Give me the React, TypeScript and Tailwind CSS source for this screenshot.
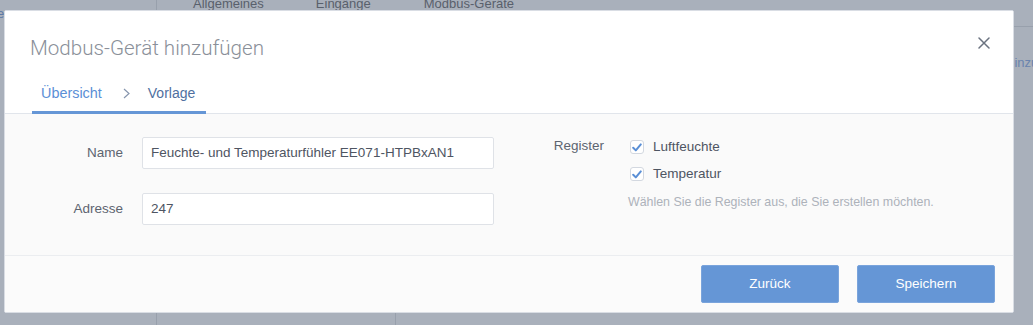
import React from "react";

const sans = "font-['Liberation_Sans',Arial,sans-serif]";

const Check = () => (
  <span className="flex h-[14px] w-[14px] items-center justify-center rounded-[3px] border border-[#d3d8e0] bg-white">
    <svg width="10" height="9" viewBox="0 0 10 9">
      <path d="M1.2 4.8 L3.8 7.4 L8.8 1.4" fill="none" stroke="#5a8fd6" strokeWidth="2" strokeLinecap="round" strokeLinejoin="round" />
    </svg>
  </span>
);

const Field = ({ label, value }: { label: string; value: string }) => (
  <div className="flex items-center">
    <label className="w-[91px] text-right text-[13.5px] text-[#5d6470]">{label}</label>
    <div className="ml-[19px] flex h-[32px] w-[352px] items-center rounded-[2px] border border-[#dfe2e7] bg-white px-[8px] text-[13.5px] text-[#4e5562]">
      {value}
    </div>
  </div>
);

export default function App() {
  return (
    <div className={`relative h-[325px] w-[1033px] overflow-hidden bg-[#a9b0bb] ${sans}`}>
      {/* page behind the overlay */}
      <div className="flex h-full">
        <div className="w-[157px] shrink-0 border-r border-[#98a0ac] pt-[4px] text-[13px] text-[#5f7aa6]">
          <div className="-ml-[3px]">e</div>
        </div>
        <div className="flex flex-1 flex-col">
          <div className="flex h-[27px] border-b border-[#98a0ac]">
            <div className="-mt-[4px] ml-[36px] flex gap-[52px] text-[13px] leading-[16px] text-[#59606c]">
              <span>Allgemeines</span>
              <span>Eingänge</span>
              <span className="ml-[1px]">Modbus-Geräte</span>
            </div>
          </div>
          <div className="mt-[26px] ml-[848px] whitespace-nowrap text-[13px] text-[#6a84ae]">Hinzufügen</div>
          <div className="mt-auto flex h-[14px]">
            <div className="w-[239px] border-r border-[#98a0ac]" />
          </div>
        </div>
      </div>

      {/* modal */}
      <div className="absolute left-[4px] top-[10px] flex h-[303px] w-[1010px] flex-col overflow-hidden rounded-[2px] border border-[#d9dde4] bg-white">
        <div className="relative border-b border-[#e1e5eb] bg-white px-[27px]">
          <div className="-ml-[2px] pt-[23px] font-['Roboto',sans-serif] text-[20.6px] font-light leading-[28px] text-[#8a9099]">
            Modbus-Gerät hinzufügen
          </div>
          <button className="absolute right-[23px] top-[26px] text-[#6b7380]">
            <svg width="12" height="12" viewBox="0 0 12 12">
              <path d="M1 1 L11 11 M11 1 L1 11" stroke="currentColor" strokeWidth="1.5" strokeLinecap="round" />
            </svg>
          </button>
          <div className="-mb-[1px] mt-[21px] inline-flex items-center border-b-[3px] border-[#6596d6] pl-[10px] pr-[11px] pb-[8px] text-[14px] leading-[20px]">
            <span className="-ml-[1px] text-[14.4px] text-[#5b8fd6]">Übersicht</span>
            <svg className="ml-[21px] mr-[18px]" width="7" height="11" viewBox="0 0 7 11">
              <path d="M1 1 L6 5.5 L1 10" fill="none" stroke="#8796ae" strokeWidth="1.2" />
            </svg>
            <span className="text-[#4f70a0]">Vorlage</span>
          </div>
        </div>

        <div className="flex h-[142px] border-b border-[#ebedf0] bg-[#fafafa] pl-[27px] pt-[23px]">
          <div className="flex flex-col gap-[24px]">
            <Field label="Name" value="Feuchte- und Temperaturfühler EE071-HTPBxAN1" />
            <Field label="Adresse" value="247" />
          </div>
          <div className="ml-[19px] flex">
            <div className="w-[91px] text-right text-[13.5px] leading-[18px] text-[#5d6470]">Register</div>
            <div className="ml-[26px] flex flex-col pt-[1px]">
              <div className="flex h-[18px] items-center gap-[9px] text-[13.5px] text-[#4e5562]">
                <Check />
                <span>Luftfeuchte</span>
              </div>
              <div className="mt-[9px] flex h-[18px] items-center gap-[9px] text-[13.5px] text-[#4e5562]">
                <Check />
                <span>Temperatur</span>
              </div>
              <div className="-ml-[2px] mt-[11px] text-[12.4px] leading-[16px] text-[#adb2ba]">
                Wählen Sie die Register aus, die Sie erstellen möchten.
              </div>
            </div>
          </div>
        </div>

        <div className="flex flex-1 justify-end gap-[18px] bg-[#fbfbfb] pr-[18px] pt-[9px]">
          <button className="h-[38px] w-[138px] rounded-[2px] border border-[#7aa4dc] bg-[#6596d6] text-[13.5px] text-white">
            Zurück
          </button>
          <button className="h-[38px] w-[138px] rounded-[2px] border border-[#7aa4dc] bg-[#6596d6] text-[13.5px] text-white">
            Speichern
          </button>
        </div>
      </div>
    </div>
  );
}
